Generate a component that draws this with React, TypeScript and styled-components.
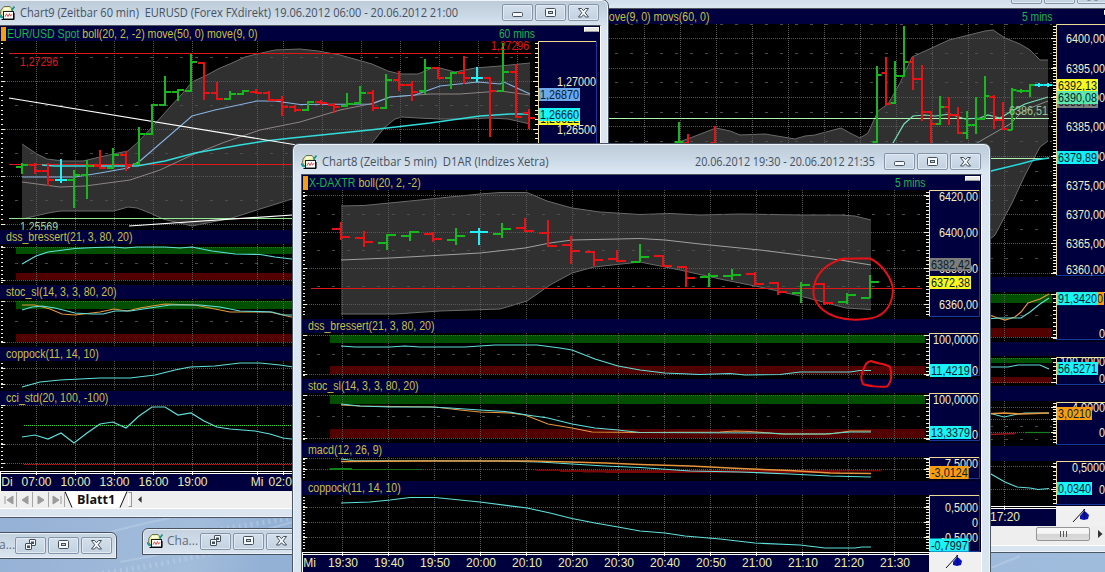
import React from 'react';
import styled, { createGlobalStyle } from 'styled-components';

const GlobalStyle = createGlobalStyle`
  html, body { margin: 0; padding: 0; overflow: hidden; }
  body { background: #9bb6d6; font-family: "Liberation Sans", Arial, sans-serif; }
  * { box-sizing: border-box; }
`;

const UI = '"Open Sans", "Noto Sans", sans-serif';
const NAVY = '#00003e';
const GREEN = '#16b81e';
const RED = '#e81216';
const CYAN = '#22f0f8';
const LINE = '#5ee0dc';
const ORANGE = '#e8963c';
const SCALE_TEXT = '#f2f0c4';

/* ---------- desktop and window chrome ---------- */

const Desktop = styled.main`
  position: relative;
  width: 1105px;
  height: 572px;
  overflow: hidden;
  background: linear-gradient(100deg, #8facd2 0, #a2bcdb 24%, #93b1d5 30%, #a0bcdd 100%);
`;

const Wallpaper = styled.svg`
  position: absolute;
  left: 0;
  top: 510px;
`;

const Frame = styled.section<{ $x: number; $y: number; $w: number; $h: number; $side: number; $bottom: number }>`
  position: absolute;
  left: ${p => p.$x}px;
  top: ${p => p.$y}px;
  width: ${p => p.$w}px;
  height: ${p => p.$h}px;
  display: flex;
  flex-direction: column;
  padding: 0 ${p => p.$side}px ${p => p.$bottom}px;
  border: 1px solid #4a5663;
  border-radius: 7px 7px 0 0;
  background: linear-gradient(#bdcbd9 0, #c9d7e5 14px, #dbe6f1 29px, #dae5f0 100%);
  box-shadow: inset 0 0 0 1px #eef4fa;
`;

const TitleBar = styled.header<{ $h: number; $pad: number; $right?: number }>`
  flex: none;
  display: flex;
  align-items: center;
  height: ${p => p.$h}px;
  padding-top: ${p => p.$pad}px;
  padding-right: ${p => p.$right ?? 1}px;
  font: 12px/16px ${UI};
  color: #46525f;
  white-space: pre;
`;

const TitleText = styled.span<{ $w: number; $k: number }>`
  display: block;
  width: ${p => p.$w}px;
  margin-left: 5px;
  transform: scaleX(${p => p.$k});
  transform-origin: left;
`;

const Spacer = styled.span`
  flex: 1;
`;

const Buttons = styled.div`
  display: flex;
  gap: 2px;
`;

const WinButton = styled.button`
  display: grid;
  place-items: center;
  width: 31px;
  height: 17px;
  padding: 0;
  border: 1px solid #8595a8;
  border-radius: 2px;
  background: linear-gradient(#d3dfeb, #c3d1e0);
  box-shadow: inset 0 0 0 1px #e1eaf3;
`;

const Body = styled.div`
  flex: 1;
  min-height: 0;
  display: flex;
  flex-direction: column;
  overflow: hidden;
  border: 1px solid #50565c;
  border-right-color: #fff;
  border-bottom-color: #fff;
  background: #000;
`;

const Mini = styled.section<{ $x: number; $y: number; $w: number }>`
  position: absolute;
  left: ${p => p.$x}px;
  top: ${p => p.$y}px;
  width: ${p => p.$w}px;
  height: 27px;
  display: flex;
  align-items: center;
  padding: 0 5px 1px 4px;
  border: 1px solid #48525e;
  border-radius: 6px 6px 0 0;
  background: linear-gradient(#c4d1df, #dae5f0);
  box-shadow: inset 0 0 0 1px #eaf1f8;
  font: 12px/16px ${UI};
  color: #5f6d7b;
`;

const AppIcon = () => (
  <svg width="16" height="16" viewBox="0 0 16 16">
    <path d="M1.500 9 2 5l3-3.500h6l2.500 3-1 6-8 3z" fill="#e6ea9a" stroke="#5c6650" strokeWidth=".9" />
    <path d="M5 3l5-.5 1.500 2-7 1.500z" fill="#fcfcd8" />
    <path d="M0 9.500 2 12l2 .5M12.500 5.500l3-4" stroke="#0c9490" strokeWidth="1.700" fill="none" />
    <rect x="4.500" y="6.500" width="10" height="7.500" fill="#fff" stroke="#1c1c1c" />
    <path d="M6 11.800l1.500-3 1.500 2.800 1.500-3 1 2.600 1.500-2" fill="none" stroke="#d4504e" />
    <path d="M2.500 14.500H15M15 8v6.500" stroke="#080808" strokeWidth="1.200" />
  </svg>
);

type GlyphKind = 'min' | 'max' | 'close' | 'restore';
const Glyph = ({ kind }: { kind: GlyphKind }) => (
  <svg width="14" height="12" viewBox="0 0 14 12" fill="#f6f9fc" stroke="#454f5a" strokeWidth="1">
    {kind === 'min' && <rect x="1.500" y="5.500" width="10" height="4" rx="1" />}
    {kind === 'max' && <><rect x="1.500" y="1.500" width="10" height="8" rx="1" /><rect x="4.500" y="4.500" width="4" height="2" fill="#c3d1e0" /></>}
    {kind === 'close' && <path d="M1.500 1.500h3l2 2.200 2-2.200h3L8.200 5.800 11.500 10h-3L6.500 7.700 4.500 10h-3l3.300-4.200z" />}
    {kind === 'restore' && <><rect x="5.500" y=".5" width="6" height="6" rx=".5" /><rect x="7.500" y="3" width="2" height="1.500" fill="#c3d1e0" /><rect x="1.500" y="4.500" width="6" height="6" rx=".5" /><rect x="3.500" y="7" width="2" height="1.500" fill="#c3d1e0" /></>}
  </svg>
);

const Controls = ({ kinds = ['min', 'max', 'close'] }: { kinds?: GlyphKind[] }) => (
  <Buttons>{kinds.map(k => <WinButton key={k} aria-label={k}><Glyph kind={k} /></WinButton>)}</Buttons>
);

/* ---------- indicator panels ---------- */

const HeaderRow = styled.div<{ $h: number; $inset: number; $right: number }>`
  position: relative;
  flex: none;
  display: flex;
  align-items: center;
  justify-content: space-between;
  height: ${p => p.$h}px;
  padding: 1px ${p => p.$right}px 0 ${p => p.$inset}px;
  background: ${NAVY};
  font-size: 12px;
  line-height: ${p => p.$h - 1}px;
  color: #c8c040;
  white-space: pre;
`;

const Label = styled.span`
  transform: scaleX(0.882);
  transform-origin: left;
`;

const Period = styled.span`
  transform: scaleX(0.86);
  transform-origin: right;
  color: #18b84c;
`;

const Symbol = styled.span`
  color: #12b84a;
`;

const Marker = styled.i`
  position: absolute;
  left: 1px;
  top: 1px;
  width: 5px;
  height: 14px;
  background: #f89c10;
`;

const Knob = styled.i<{ $right: number }>`
  position: absolute;
  right: ${p => p.$right}px;
  top: 1px;
  width: 15px;
  height: 5px;
  border: 1px solid #fff;
  border-bottom-color: #999;
  background: #e8e8e8;
`;

const PlotRow = styled.div`
  flex: none;
  display: flex;
  background: #000;
`;

const Svg = styled.svg`
  display: block;
  flex: none;
  overflow: hidden;
`;

const range = (a: number, b: number, s: number) => {
  const r: number[] = [];
  for (let v = a; v <= b; v += s) r.push(v);
  return r;
};

interface PlotProps {
  x: number; y: number; w: number; h: number;
  vx: number[]; dots?: number[]; dashes?: number[];
  tick?: number; zones?: [number, number, number, number]; zoneX?: [number, number];
  under?: React.ReactNode; children?: React.ReactNode;
}

const Plot = ({ x, y, w, h, vx, dots = [], dashes = [], tick = 4, zones, zoneX, under, children }: PlotProps) => (
  <Svg width={w} height={h} viewBox={`${x} ${y} ${w} ${h}`}>
    {under}
    {zones && zoneX && <>
      <rect x={zoneX[0]} y={zones[0]} width={zoneX[1] - zoneX[0]} height={zones[1] - zones[0]} fill="#005000" />
      <rect x={zoneX[0]} y={zones[2]} width={zoneX[1] - zoneX[0]} height={zones[3] - zones[2]} fill="#520000" />
    </>}
    <g stroke="#585858" strokeWidth="1">
      {vx.map(v => <line key={v} x1={v} x2={v} y1={y} y2={y + h} strokeDasharray="1 1" />)}
      {dots.map(v => <line key={v} x1={x + 5} x2={x + w - 4} y1={v} y2={v} strokeDasharray="1 1" />)}
      {dashes.map(v => <line key={v} x1={x + 15} x2={x + w - 4} y1={v} y2={v} stroke="#4c4c4c" strokeDasharray="3 12" />)}
    </g>
    <g stroke="#f4f0d8" strokeWidth="1">
      {range(y + 2.5, y + h - 2, tick).map(v => <React.Fragment key={v}>
        <line x1={x + 1} x2={x + 3} y1={Math.floor(v) + .5} y2={Math.floor(v) + .5} />
        <line x1={x + w - 3} x2={x + w} y1={Math.floor(v) + .5} y2={Math.floor(v) + .5} />
      </React.Fragment>)}
      {dots.map(v => <React.Fragment key={v}>
        <line x1={x + 1} x2={x + 5} y1={v} y2={v} />
        <line x1={x + w - 5} x2={x + w} y1={v} y2={v} />
      </React.Fragment>)}
    </g>
    {children}
  </Svg>
);

const Curve = ({ p, c = LINE, w = 1.2 }: { p: string; c?: string; w?: number }) => (
  <polyline points={p} fill="none" stroke={c} strokeWidth={w} />
);

const Band = ({ up, low }: { up: string; low: string }) => (
  <g>
    <polygon points={`${up} ${low.split(' ').reverse().join(' ')}`} fill="#303030" />
    <polyline points={up} fill="none" stroke="#6a6a6a" />
    <polyline points={low} fill="none" stroke="#6a6a6a" />
  </g>
);

type Bar = [number, number, number, number, number, 'g' | 'r' | 'c'];
const TONES = { g: GREEN, r: RED, c: CYAN };
const Bars = ({ data, t }: { data: Bar[]; t: number }) => (
  <g>
    {data.map(([x, hi, lo, o, c, k]) => (
      <path key={x} d={`M${x} ${hi}V${lo}M${x - t} ${o}H${x}M${x} ${c}H${x + t}`} stroke={TONES[k]} strokeWidth="2" />
    ))}
  </g>
);

type Tag = [number, string, string];
interface ScaleProps {
  x: number; y: number; w: number; h: number; box: [number, number, number, number];
  labels: [number, string][]; tags?: Tag[]; right: number;
}

const textWidth = (s: string) => [...s].reduce((n, ch) => n + (ch === ',' ? 3 : ch === '-' ? 3.7 : 6), 0);

const Scale = ({ x, y, w, h, box, labels, tags = [], right }: ScaleProps) => {
  const [bx, by, bw, bh] = box;
  return (
    <Svg width={w} height={h} viewBox={`${x} ${y} ${w} ${h}`} fontFamily='"Liberation Sans", Arial, sans-serif' fontSize="12">
      <rect x={x} y={y} width={w} height={h} fill="#00001e" />
      <rect x={bx} y={by} width={bw} height={bh} fill={NAVY} />
      <path d={`M${bx + .5} ${by + bh}V${by + .5}H${bx + bw}`} fill="none" stroke="#eedc92" />
      <path d={`M${bx} ${by + bh - .5}H${bx + bw - .5}V${by}`} fill="none" stroke="#1838a0" />
      {labels.map(([ly, s]) => (
        <text key={ly} x={right - textWidth(s)} y={ly + 4.5} textLength={textWidth(s)} lengthAdjust="spacingAndGlyphs" fill={SCALE_TEXT}>{s}</text>
      ))}
      {tags.map(([ty, s, fill]) => (
        <g key={ty}>
          <rect x={bx + 1} y={ty - 6.5} width={textWidth(s) + 2} height="13" fill={fill} />
          <text x={bx + 2} y={ty + 4.5} textLength={textWidth(s)} lengthAdjust="spacingAndGlyphs" fill="#06202c">{s}</text>
        </g>
      ))}
    </Svg>
  );
};

const Header = ({ h, inset = 6, right = 0, symbol, text, period, knob = 1 }: { h: number; inset?: number; right?: number; symbol?: string; text?: string; period?: string; knob?: number }) => (
  <HeaderRow $h={h} $inset={inset} $right={right}>
    {symbol && <Marker />}
    <Label>{symbol && <Symbol>{symbol} </Symbol>}{text}</Label>
    {period && <Period>{period}</Period>}
    {period && <Knob $right={knob} />}
  </HeaderRow>
);

/* ---------- time axis and sheet tabs ---------- */

const AxisRow = styled.div`
  flex: none;
  display: flex;
  height: 20px;
  background: #f0f0f0;
`;

const Corner = styled.div<{ $right?: number }>`
  flex: 1;
  display: grid;
  place-items: center;
  padding-right: ${p => p.$right ?? 0}px;
`;

const TimeAxis = ({ x, y, w, ticks, labels }: { x: number; y: number; w: number; ticks: number[]; labels: [number, string][] }) => (
  <Svg width={w} height={20} viewBox={`${x} ${y} ${w} 20`} fontFamily='"Liberation Sans", Arial, sans-serif' fontSize="12">
    <rect x={x} y={y} width={w} height="20" fill={NAVY} />
    <rect x={x} y={y} width={w} height="3" fill="#000" />
    <rect x={x} y={y} width={w} height="1" fill="#fff" />
    <rect x={x} y={y + 2} width={w} height="1" fill="#fff" />
    <rect x={x} y={y} width="1" height="20" fill="#fff" />
    {ticks.map(t => <rect key={t} x={t - .5} y={y} width="1" height="4" fill="#fff" />)}
    {labels.map(([lx, s]) => <text key={lx} x={lx} y={y + 15} textAnchor="middle" fill="#ecebb0">{s}</text>)}
  </Svg>
);

const Pin = () => (
  <svg width="24" height="18" viewBox="0 0 24 18">
    <path d="M3 15 15 2" stroke="#111" strokeWidth="1" />
    <path d="M10 9l4-5 2 1 3 3-1 4-4 1-4-1z" fill="#0a12b4" />
    <path d="M14 2l1 10" stroke="#04065c" />
  </svg>
);

const TabStrip = styled.div`
  flex: 1;
  display: flex;
  align-items: center;
  padding: 0 0 0 1px;
  background: #efefef;
`;

const NavButton = styled.span`
  display: grid;
  place-items: center;
  width: 16px;
  height: 15px;
  border-right: 1px solid #a5a5a5;
`;

const Nav = ({ d }: { d: string }) => (
  <NavButton><svg width="10" height="10" viewBox="0 0 10 10"><path d={d} fill="#9b9b9b" stroke="#9b9b9b" strokeWidth="1" /></svg></NavButton>
);

const SheetTab = styled.div`
  position: relative;
  display: grid;
  place-items: center;
  width: 63px;
  height: 17px;
  font: bold 12px/16px ${UI};
  color: #111;
`;

const TabShape = styled.svg`
  position: absolute;
  inset: 0;
`;

const TabText = styled.span`
  position: relative;
  transform: scaleX(1.05);
`;

const Splitter = styled.i`
  width: 4px;
  height: 15px;
  margin: 0 6px 0 0;
  border: 1px solid #999;
  border-left-color: #fff;
`;

const ScrollRow = styled.div`
  flex: 1;
  display: flex;
  justify-content: flex-end;
  align-items: center;
  gap: 8px;
  padding: 0 17px 3px 0;
  background: #eeeeee;
`;

const Thumb = styled.div`
  display: flex;
  align-items: center;
  justify-content: center;
  gap: 2px;
  width: 54px;
  height: 14px;
  border: 1px solid #959595;
  border-radius: 2px;
  background: linear-gradient(#f6f6f6 45%, #d4d4d4 50%, #dcdcdc);
`;

const Grip = styled.i`
  width: 1px;
  height: 6px;
  background: #555;
`;

/* ---------- Chart9: EUR/USD, 60 minutes ---------- */

const V9 = [36.5, 75.5, 114.5, 153.5, 192.5, 257.5, 283.5, 322.5, 361.5, 400.5, 439.5, 478.5, 517.5];
const BARS9: Bar[] = [
  [22, 163, 174, 167, 165, 'g'], [35, 163, 174, 165, 171, 'r'], [48, 163, 186, 171, 180, 'r'], [61, 159, 183, 180, 180, 'c'],
  [74, 170, 208, 180, 175, 'g'], [87, 160, 199, 175, 166, 'g'], [100, 150, 169, 166, 168, 'r'], [113, 148, 169, 168, 155, 'g'],
  [126, 151, 171, 155, 166, 'r'], [139, 127, 165, 164, 134, 'g'], [152, 104, 135, 134, 105, 'g'], [165, 76, 106, 105, 92, 'g'],
  [178, 89, 101, 92, 90, 'g'], [191, 54, 92, 91, 62, 'g'], [204, 62, 100, 63, 93, 'r'], [217, 82, 100, 93, 99, 'r'],
  [230, 91, 100, 99, 94, 'g'], [243, 90, 95, 94, 91, 'g'], [256, 89, 94, 92, 93, 'r'], [269, 91, 101, 93, 100, 'r'],
  [282, 96, 116, 100, 107, 'r'], [295, 105, 112, 107, 110, 'r'], [308, 101, 111, 110, 102, 'g'], [321, 100, 105, 102, 103, 'r'],
  [334, 103, 113, 105, 107, 'r'], [347, 93, 107, 106, 104, 'g'], [360, 86, 104, 103, 93, 'g'], [373, 90, 111, 93, 108, 'r'],
  [386, 74, 109, 108, 80, 'g'], [399, 71, 91, 80, 85, 'r'], [412, 81, 101, 85, 92, 'r'], [425, 59, 94, 91, 68, 'g'],
  [438, 67, 79, 68, 78, 'r'], [451, 72, 89, 78, 73, 'g'], [464, 56, 84, 73, 78, 'r'], [477, 67, 82, 78, 78, 'c'],
  [490, 77, 137, 78, 91, 'r'], [503, 43, 91, 91, 72, 'g'], [516, 64, 118, 72, 117, 'r'], [529, 109, 129, 113, 118, 'r'],
];

const Chart9 = () => {
  const base = { x: 0, w: 538, vx: V9 };
  const empty = (y: number, h: number) => <Scale x={538} y={y} w={61} h={h} box={[539, y, 58, h]} labels={[]} right={596} />;
  return (
    <Frame $x={-9} $y={-1} $w={618} $h={519} $side={7} $bottom={8}>
      <TitleBar $h={25} $pad={0} $right={2}>
        <AppIcon />
        <TitleText $w={440} $k={0.921}>{'Chart9 (Zeitbar 60 min)  EURUSD (Forex FXdirekt) 19.06.2012 06:00 - 20.06.2012 21:00'}</TitleText>
        <Spacer />
        <Controls />
      </TitleBar>
      <Body>
        <Header h={15} inset={7} right={65} symbol="EUR/USD Spot" text="boll(20, 2, -2) move(50, 0) move(9, 0)" period="60 mins" />
        <PlotRow>
          <Plot {...base} y={41} h={189} dots={[81.5, 129.5, 176.5, 224.5]} dashes={[57.5, 105.5, 153.5, 200.5]} tick={4.75}
            under={<Band
              up="22,144 37,154 47,159 63,161 83,161 100,157 118,153 128,151 138,142 153,126 170,107 182,94 192,82 207,75 218,69 232,63 245,57 257,54 275,50 300,49 318,51 340,55 372,64 388,71 400,74 418,74 432,68 440,68 455,72 475,68 500,66 530,63"
              low="22,219 48,213 60,211 114,211 128,207 137,208 150,213 163,219 192,226 232,218 260,209 292,199 340,175 372,143 385,127 395,119 402,117 418,118 440,119 465,119 490,118 508,119 530,124" />}>
            <Curve p="9,53.5 531,53.5" c="#e01818" w={1} />
            <Curve p="9,164.500 300,164.500" c="#e01818" w={1} />
            <Curve p="9,218.500 300,218.500" c="#94e894" w={1} />
            <Curve p="22,182 60,187 85,186 130,180 160,170 192,155 225,142 260,130 300,122 340,110 370,104 390,97 430,94 460,94 500,91 530,95" c="#8c8482" w={1} />
            <Curve p="42,165 55,166 137,166 165,161 195,153 240,145 265,141 292,138 370,130 430,123 480,116 510,114 530,114" c="#32dcdc" w={1.4} />
            <Curve p="22,177 75,177 100,173 128,168 140,161 192,116 215,110 257,101 275,101 300,104.500 372,104 390,97 415,95 440,86 478,82 500,84 504,82 530,94" c="#86b4e4" w={1.1} />
            <Curve p="9,98 300,145.500" c="#fff" w={1.2} />
            <Curve p="129,226 300,214.500" c="#fff" w={1.2} />
            <Bars data={BARS9} t={6} />
            <g fontSize="12" fontFamily='"Liberation Sans", Arial, sans-serif'>
              <text x="20" y="65.500" textLength="38" lengthAdjust="spacingAndGlyphs" fill="#e01818">1,27296</text>
              <text x="491" y="49.500" textLength="38" lengthAdjust="spacingAndGlyphs" fill="#e01818">1,27296</text>
              <text x="20" y="230.500" textLength="38" lengthAdjust="spacingAndGlyphs" fill="#a4d8a4">1,25569</text>
            </g>
          </Plot>
          <Scale x={538} y={41} w={61} h={189} box={[538, 41, 59, 189]} right={596}
            labels={[[81.5, '1,27000'], [129.5, '1,26500']]}
            tags={[[94.5, '1,26870', '#6ca8ec'], [118.500, '1,26622', '#f8f820'], [114.5, '1,26660', '#18f4f8']]} />
        </PlotRow>
        <Header h={14} text="dss_bressert(21, 3, 80, 20)" />
        <PlotRow>
          <Plot {...base} y={244} h={41} dots={[247.5, 280.5]} dashes={[263.5]} zones={[247, 254, 273, 280]} zoneX={[16, 534]}>
            <Curve p="22,264 36,256 48,252 75,248.500 95,247.500 114,247 125,248 137,247 165,247 180,248 192,247 212,251 235,254 260,254.500 275,257 300,260" />
          </Plot>
          {empty(244, 41)}
        </PlotRow>
        <Header h={14} text="stoc_sl(14, 3, 3, 80, 20)" />
        <PlotRow>
          <Plot {...base} y={299} h={48} dots={[301.5, 342.5]} dashes={[321.5]} zones={[301, 309, 334, 342]} zoneX={[16, 534]}>
            <Curve p="22,305 35,305 50,309 62,314 75,315 100,312 114,309 127,311 140,308 152,306 165,304 195,305 215,309 230,312 270,312 300,319" c={ORANGE} />
            <Curve p="22,310 32,307 42,306 55,308 75,313 92,314 103,314 115,311 130,311 150,308 170,305 200,305 220,307 240,311 272,312 283,315 300,315" />
          </Plot>
          {empty(299, 48)}
        </PlotRow>
        <Header h={14} text="coppock(11, 14, 10)" />
        <PlotRow>
          <Plot {...base} y={361} h={30} dots={[368.5, 384.5]}>
            <Curve p="22,387 40,382 60,380 80,379 100,378 130,378 155,375 175,370 190,367 215,366 240,363 260,363 280,365 300,368" />
          </Plot>
          {empty(361, 30)}
        </PlotRow>
        <Header h={14} text="cci_std(20, 100, -100)" />
        <PlotRow>
          <Plot {...base} y={405} h={66} dots={[405.5, 444.5, 463.5]}>
            <line x1="24" x2="534" y1="425.500" y2="425.500" stroke="#30d830" strokeDasharray="1 1" />
            <line x1="24" x2="534" y1="464.500" y2="464.500" stroke="#c02020" strokeDasharray="1 1" />
            <Curve p="22,437 35,435 48,439 61,433 74,443 87,433 100,424 113,422 126,428 139,416 152,407 165,407 178,415 191,413 204,421 217,427 230,429 255,431 270,434 283,438 300,440" />
          </Plot>
          {empty(405, 66)}
        </PlotRow>
        <AxisRow>
          <TimeAxis x={0} y={471} w={538} ticks={V9} labels={[[7, 'Di'], [36.5, '07:00'], [75.5, '10:00'], [114.5, '13:00'], [153.5, '16:00'], [192.5, '19:00'], [257, 'Mi'], [283.5, '02:00']]} />
        </AxisRow>
        <TabStrip>
          <Nav d="M1 1v8M9 1v8L3 5z" /><Nav d="M8 1v8L2 5z" /><Nav d="M2 1v8l6-4z" /><Nav d="M1 1v8l6-4zM9 1v8" />
          <SheetTab>
            <TabShape width="63" height="17" viewBox="0 0 63 17">
              <path d="M0 .5 7 16.500H55L62 .5z" fill="#fff" />
              <path d="M0 .5 7 16.500M55 16.500 62 .5" stroke="#111" />
            </TabShape>
            <TabText>Blatt1</TabText>
          </SheetTab>
          <Splitter />
          <svg width="4" height="7" viewBox="0 0 5 8"><path d="M4.500 0v8L0 4z" fill="#333" /></svg>
        </TabStrip>
      </Body>
    </Frame>
  );
};

/* ---------- background chart: 5 minutes ---------- */

const V5 = range(644.5, 1010, 36);
const BARS5: Bar[] = [
  [679, 122, 150, 142, 142, 'g'], [688, 134, 150, 143, 145, 'r'], [715, 126, 150, 143, 145, 'r'],
  [877, 66, 143, 142, 75, 'g'], [886, 57, 105, 73, 104, 'r'], [895, 61, 104, 103, 76, 'g'], [904, 26, 77, 76, 62, 'g'],
  [913, 57, 90, 62, 79, 'r'], [922, 65, 121, 79, 112, 'r'], [931, 111, 150, 112, 124, 'r'], [940, 96, 125, 124, 107, 'g'],
  [949, 97, 125, 107, 115, 'r'], [958, 107, 134, 115, 133, 'r'], [967, 111, 139, 133, 125, 'g'], [976, 97, 134, 125, 119, 'g'],
  [985, 76, 119, 119, 96, 'g'], [994, 95, 129, 97, 120, 'r'], [1003, 102, 130, 120, 129, 'r'], [1012, 88, 130, 130, 90, 'g'],
  [1021, 89, 93, 91, 91, 'g'], [1030, 84, 97, 91, 85, 'g'], [1039, 83, 87, 85, 85, 'c'], [1048, 83, 87, 85, 85, 'c'],
];

const Chart5 = () => {
  const base = { x: 600, w: 456, vx: V5 };
  return (
    <Frame $x={590} $y={-22} $w={540} $h={575} $side={8} $bottom={6}>
      <TitleBar $h={29} $pad={4} $right={13}>
        <Spacer />
        <Controls />
      </TitleBar>
      <Body>
        <Header h={15} inset={0} right={68} text="move(9, 0) movs(60, 0)" period="5 mins" knob={1} />
        <PlotRow>
          <Plot {...base} y={24} h={253} dots={[38.5, 68.5, 97.5, 126.5, 156.5, 185.5, 214.5, 243.5, 273.5]} dashes={[24.5, 53.5, 82.5, 112.5, 141.5, 171.5, 200.5, 229.5, 258.5]} tick={2.93}
            under={<Band
              up="676,143 690,138 716,128 730,131 740,135 765,134 795,139 805,136 815,135 841,128 850,133 860,138 868,133 878,111 888,104 900,83 912,57 949,40 985,31 993,30 1005,38 1020,44 1030,50 1040,60 1048,60"
              low="676,272 900,272 989,240 995,235 1012,203 1025,175 1040,147 1048,141" />}>
            <Curve p="600,118.500 1049,118.500" c="#b0f0b0" w={1} />
            <Curve p="980,158.500 1049,158.500" c="#b0f0b0" w={1} />
            <Curve p="970,147 977,143 1010,124 1020,114 1030,108 1048,101" c="#8c8c88" w={1} />
            <Curve p="889,150 893,143 904,124 913,116 925,115 935,116 950,114 965,119 980,118 988,115 1000,118 1010,112 1025,104 1048,97" c="#74e0b4" />
            <Curve p="985,172.500 991,171 1020,164 1035,160 1049,158" c="#22dce0" w={1.4} />
            <Bars data={BARS5} t={4.5} />
            <text x="1009" y="114.500" fontSize="12" fontFamily='"Liberation Sans", Arial, sans-serif' textLength="39" lengthAdjust="spacingAndGlyphs" fill="#94c494">6386,51</text>
          </Plot>
          <Scale x={1056} y={24} w={64} h={253} box={[1056, 24, 56, 252]} right={1105}
            labels={[[38.5, '6400,00'], [68.5, '6395,00'], [97.5, '6390,00'], [126.5, '6385,00'], [156.5, '6380,00'], [185.5, '6375,00'], [214.5, '6370,00'], [243.5, '6365,00'], [269.5, '6360,00']]}
            tags={[[85.5, '6392,13', '#f8f820'], [101.5, '6388,48', '#7c7c7c'], [97.5, '6390,08', '#5ce8ae'], [157.5, '6379,89', '#10f0f8']]} />
        </PlotRow>
        <Header h={15} />
        <PlotRow>
          <Plot {...base} y={292} h={50} dots={[294.5, 337.5]} dashes={[315.5]} zones={[294, 303, 328, 337]} zoneX={[616, 1052]}>
            <Curve p="985,315 992,316 998,318 1005,320 1015,317 1021,312 1028,303 1040,299 1049,294" c={ORANGE} />
            <Curve p="985,319 1000,318 1012,318 1021,318 1030,312 1040,304 1049,298" />
          </Plot>
          <Scale x={1056} y={292} w={64} h={50} box={[1056, 292, 56, 48]} right={1105} labels={[[333.5, '0']]} tags={[[298.5, '91,34200', '#f89c10'], [298.6, '91,3420', '#18f4f8']]} />
        </PlotRow>
        <Header h={14} />
        <PlotRow>
          <Plot {...base} y={356} h={30} dots={[358.5, 382.5]} zones={[358, 363, 377, 383]} zoneX={[616, 1052]}>
            <Curve p="985,367 1008,367 1018,365 1040,365 1049,369" />
          </Plot>
          <Scale x={1056} y={356} w={64} h={30} box={[1056, 357, 56, 28]} right={1105} labels={[[361.5, '100,0000'], [378.5, '0']]} tags={[[368.5, '56,5271', '#18f4f8']]} />
        </PlotRow>
        <Header h={15} />
        <PlotRow>
          <Plot {...base} y={401} h={45} dots={[407.5, 419.5, 432.5]} dashes={[426.5, 439.5]} tick={3}>
            <Curve p="985,412 1004,417 1018,414 1025,413 1049,413" w={1} />
            <Curve p="985,414 1004,413 1020,414 1049,413" c={ORANGE} w={1.5} />
            <Curve p="990,434.500 1015,433.500" c="#a01818" w={1.5} />
            <Curve p="1026,432.500 1049,432.500" c="#148020" />
          </Plot>
          <Scale x={1056} y={401} w={64} h={45} box={[1056, 402, 56, 43]} right={1105} labels={[[407.5, '4,0000'], [432.5, '0']]} tags={[[413.5, '3,0210', '#f89c10']]} />
        </PlotRow>
        <Header h={15} />
        <PlotRow>
          <Plot {...base} y={461} h={45} dots={[466.5, 489.5]}>
            <Curve p="985,468 991,474 1005,482 1017,487 1030,488 1038,489.500 1049,488.500" />
          </Plot>
          <Scale x={1056} y={461} w={64} h={45} box={[1056, 461, 56, 44]} right={1105} labels={[[467.5, '0,5000'], [489.5, '0']]} tags={[[488.5, '0,0340', '#18f4f8']]} />
        </PlotRow>
        <AxisRow>
          <TimeAxis x={600} y={506} w={456} ticks={V5} labels={[[1005, '17:20']]} />
          <Corner $right={12}><Pin /></Corner>
        </AxisRow>
        <ScrollRow>
          <Thumb><Grip /><Grip /><Grip /></Thumb>
          <svg width="5" height="8" viewBox="0 0 5 8"><path d="M0 0v8l4.500-4z" fill="#333" /></svg>
        </ScrollRow>
      </Body>
    </Frame>
  );
};

/* ---------- Chart8: X-DAXTR, 5 minutes ---------- */

const V8 = range(342.5, 895, 46);
const TIMES8 = ['19:30', '19:40', '19:50', '20:00', '20:10', '20:20', '20:30', '20:40', '20:50', '21:00', '21:10', '21:20', '21:30'];
const BARS8: Bar[] = [
  [341, 222, 240, 229, 237, 'r'], [364, 231, 247, 238, 242, 'r'], [387, 234, 250, 243, 235, 'g'], [410, 231, 241, 236, 232, 'g'],
  [433, 232, 242, 234, 239, 'r'], [456, 228, 245, 240, 236, 'g'], [479, 228, 245, 232, 232, 'c'], [502, 223, 238, 234, 229, 'g'],
  [525, 218, 232, 228, 231, 'r'], [548, 220, 247, 233, 246, 'r'], [571, 236, 264, 245, 251, 'r'], [594, 251, 266, 252, 260, 'r'],
  [617, 250, 262, 259, 261, 'r'], [640, 244, 262, 262, 257, 'g'], [663, 255, 267, 256, 266, 'r'], [686, 266, 287, 267, 278, 'r'],
  [709, 273, 287, 277, 276, 'g'], [732, 269, 280, 276, 275, 'g'], [755, 272, 285, 274, 284, 'r'], [778, 282, 295, 283, 292, 'r'],
  [801, 282, 303, 293, 285, 'g'], [824, 283, 305, 284, 303, 'r'], [847, 293, 304, 302, 295, 'g'], [870, 275, 298, 298, 282, 'g'],
];

const RangeText = styled.span`
  margin-right: 9px;
  transform: scaleX(0.9);
  transform-origin: right;
`;

const Chart8 = () => {
  const base = { x: 302, w: 627, vx: V8 };
  const sc = { x: 929, w: 52, right: 978 };
  return (
    <Frame $x={292} $y={143} $w={699} $h={440} $side={8} $bottom={0}>
      <TitleBar $h={30} $pad={5}>
        <AppIcon />
        <TitleText $w={300} $k={0.94}>{'Chart8 (Zeitbar 5 min)  D1AR (Indizes Xetra)'}</TitleText>
        <Spacer />
        <RangeText>20.06.2012 19:30 - 20.06.2012 21:35</RangeText>
        <Controls />
      </TitleBar>
      <Body>
        <Header h={15} inset={7} right={56} symbol="X-DAXTR" text="boll(20, 2, -2)" period="5 mins" />
        <PlotRow>
          <Plot {...base} y={190} h={129} dots={[195.5, 232.5, 268.5, 304.5]} dashes={[214.5, 250.5, 286.5]} tick={3.6}
            under={<Band
              up="341,206 364,205.500 410,201 480,194 500,192.500 527,192.500 547,201 572,208 600,212 640,214.500 670,213.500 700,215 740,214 800,215 840,215 855,216 871,220"
              low="341,314 395,314 440,311 500,309 527,301 550,285 572,273 594,267 617,264.500 640,262 680,270 720,279 760,287 800,296 846,308 871,309.500" />}>
            <Curve p="341,260 390,258 480,253 525,248 550,243 572,240 640,238.500 665,240 700,244 760,250 800,255 840,260 871,265" c="#a0a0a0" w={1} />
            <Curve p="311,288.500 922,288.500" c="#e01818" w={1} />
            <Bars data={BARS8} t={9} />
          </Plot>
          <Scale {...sc} y={190} h={129} box={[929, 190, 51, 127]}
            labels={[[196.5, '6420,00'], [232.5, '6400,00'], [268.5, '6380,00'], [304.5, '6360,00']]}
            tags={[[264.5, '6382,42', '#7c7c7c'], [282.5, '6372,38', '#f8f820']]} />
        </PlotRow>
        <Header h={14} text="dss_bressert(21, 3, 80, 20)" />
        <PlotRow>
          <Plot {...base} y={333} h={46} dots={[335.5, 374.5]} dashes={[354.5]} zones={[335, 343, 366, 374]} zoneX={[330, 925]}>
            <Curve p="341,346 355,347 390,347 405,346 420,347 465,347 495,345 537,345 560,348 572,350 595,359 618,366 640,370 665,373 700,374.500 715,374 730,373.500 745,375 780,374.500 800,372 850,372 860,370.500 871,370.500" />
          </Plot>
          <Scale {...sc} y={333} h={46} box={[929, 333, 51, 43]} labels={[[339.5, '100,0000'], [370.5, '0']]} tags={[[370.5, '11,4219', '#18f4f8']]} />
        </PlotRow>
        <Header h={14} text="stoc_sl(14, 3, 3, 80, 20)" />
        <PlotRow>
          <Plot {...base} y={393} h={50} dots={[395.5, 438.5]} dashes={[416.5]} zones={[395, 404, 429, 438]} zoneX={[330, 925]}>
            <Curve p="341,405 360,406 435,407 460,410 480,412 510,413 525,415 548,424 572,428 592,432 640,432.500 720,432 735,431 750,431.500 780,434 830,434 850,431 871,431" c={ORANGE} />
            <Curve p="341,404 360,406 390,407 430,407 450,408 480,410 505,411.500 527,415 548,418 572,424 595,428 618,430 640,432.500 770,433 785,434 825,434 850,432 871,432" />
          </Plot>
          <Scale {...sc} y={393} h={50} box={[929, 393, 51, 48]} labels={[[399.5, '100,0000'], [434.5, '0']]} tags={[[432.5, '13,3379', '#18f4f8']]} />
        </PlotRow>
        <Header h={14} text="macd(12, 26, 9)" />
        <PlotRow>
          <Plot {...base} y={457} h={24} dots={[458.5, 469.5]} tick={3}>
            <Curve p="330,469 352,469" c="#108018" w={2} />
            <Curve p="352,469.500 421,469.500" c="#107018" w={1} />
            <path d="M536 469.500H560V470H583V470H881V471.500H840V473H605V472.500H583V472H560V471H536z" fill="#780808" />
            <Curve p="341,459 353,460.500 500,461 540,462 572,464 605,466 640,467.500 690,471 740,472 790,474 830,476 871,477" />
            <Curve p="341,461.500 430,461 530,461 570,462 605,463 640,464.500 690,466 740,468.500 790,470.500 830,473 871,473.500" c={ORANGE} w={1.5} />
          </Plot>
          <Scale {...sc} y={457} h={24} box={[929, 457, 51, 22]} labels={[[463.5, '7,5000']]} tags={[[472.5, '-3,0124', '#f89c10']]} />
        </PlotRow>
        <Header h={14} text="coppock(11, 14, 10)" />
        <PlotRow>
          <Plot {...base} y={495} h={57} dots={[507.5, 522.5, 537.5]} tick={3}>
            <Curve p="341,503 370,502 390,500 410,497.500 435,497.500 460,500 480,502 527,508 550,513 572,518.500 595,523 618,527 640,531 665,533 685,536 720,539 755,543 800,545 825,548 855,548 862,547 871,547" />
          </Plot>
          <Scale {...sc} y={495} h={57} box={[929, 495, 51, 57]} labels={[[507.5, '0,5000'], [522.5, '0'], [537.5, '-0,5000']]} tags={[[545, '-0,7997', '#18f4f8']]} />
        </PlotRow>
        <AxisRow>
          <TimeAxis x={302} y={552} w={627} ticks={V8} labels={[[309.5, 'Mi'], ...TIMES8.map((t, i) => [343 + 46 * i, t] as [number, string])]} />
          <Corner><Pin /></Corner>
        </AxisRow>
      </Body>
    </Frame>
  );
};

const MiniTitle = styled.span<{ $w: number }>`
  width: ${p => p.$w}px;
  margin-left: 4px;
`;

/* hand-drawn highlights over the Chart8 window */
const Ink = styled.svg`
  position: absolute;
  left: 800px;
  top: 250px;
  pointer-events: none;
`;

export default function App() {
  return (
    <>
      <GlobalStyle />
      <Desktop>
        <Wallpaper width="1105" height="62" viewBox="0 510 1105 62" stroke="#bed2e8" fill="none" opacity=".5">
          <path d="M30 556Q110 530 170 518M120 562Q200 548 293 522M991 568L1020 556" strokeWidth="2" />
          <path d="M90 575Q200 560 293 532M215 530L293 518" strokeWidth="5" strokeDasharray="2 4" />
        </Wallpaper>
        <Mini $x={-10} $y={532} $w={127}>
          <MiniTitle $w={17}>a...</MiniTitle>
          <Controls kinds={['restore', 'max', 'close']} />
        </Mini>
        <Mini $x={142} $y={528} $w={175}>
          <AppIcon />
          <MiniTitle $w={33}>Cha...</MiniTitle>
          <Controls kinds={['restore', 'max', 'close']} />
        </Mini>
        <Chart5 />
        <Chart9 />
        <Chart8 />
        <Ink width="110" height="145" viewBox="800 250 110 145" fill="none" stroke="#e81014" strokeWidth="2" strokeLinecap="round">
          <path d="M838 259.500C846 258 862 258.500 870 258.500C882 264 893 279 893 291C892 307 883 318 866 319C848 321 834 319 823 310C815 303 812 295 814 286C817 272 828 262 845 258.500" />
          <path d="M871 361C878 364 887 364 890 367C892 373 892 382 887 386.500C880 387.500 868 386 863 384C860 379 861 373 865 366C866 363 869 361 871 361" strokeLinejoin="round" />
        </Ink>
      </Desktop>
    </>
  );
}
